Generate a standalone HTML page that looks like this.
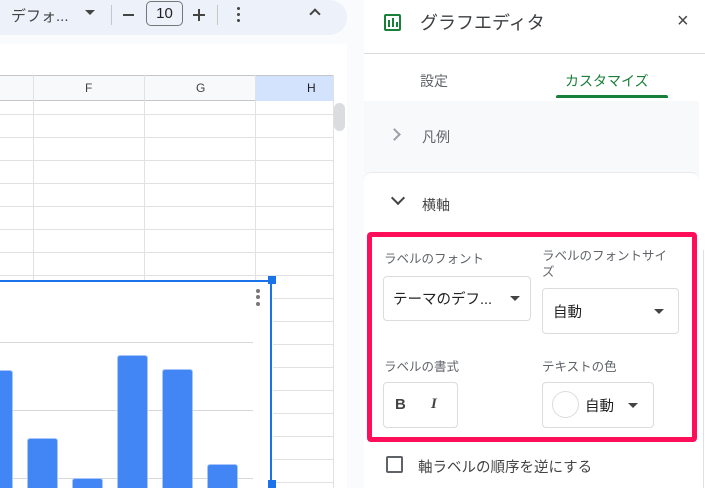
<!DOCTYPE html>
<html style="overflow:hidden;width:705px;height:488px"><head><meta charset="utf-8"><style>
*{margin:0;padding:0;box-sizing:border-box}
body{width:705px;height:488px;overflow:hidden;position:relative;background:#f9fbfd;font-family:"Liberation Sans","Noto Sans CJK JP",sans-serif;color:#444}
.a{position:absolute}
.hl{position:absolute;height:1px;background:#e1e1e1}
.vl{position:absolute;width:1px;background:#e1e1e1}
.bar{position:absolute;background:#4285f4;border-radius:2px 2px 0 0;box-shadow:0 0 0 1px #a8c6fa}
</style></head><body>
<div class="a" style="left:0;top:0;width:705px;height:488px;overflow:hidden">
<!-- toolbar -->
<div class="a" style="left:-20px;top:0;width:367px;height:35px;background:#edf2fa;border-radius:0 18px 18px 0"></div>
<div class="a" style="left:11px;top:5px;font-size:15px;color:#444">デフォ...</div>
<div class="a" style="left:85px;top:10px;width:0;height:0;border-left:5px solid transparent;border-right:5px solid transparent;border-top:5px solid #444"></div>
<div class="a" style="left:111px;top:5px;width:1px;height:20px;background:#c7c7c7"></div>
<div class="a" style="left:123px;top:14px;width:11px;height:2px;background:#444"></div>
<div class="a" style="left:146px;top:1px;width:37px;height:25px;border:1px solid #747775;border-radius:5px;font-size:15px;text-align:center;line-height:23px;color:#222">10</div>
<div class="a" style="left:193px;top:14px;width:12px;height:2px;background:#444"></div>
<div class="a" style="left:198px;top:9px;width:2px;height:12px;background:#444"></div>
<div class="a" style="left:217px;top:5px;width:1px;height:20px;background:#c7c7c7"></div>
<div class="a" style="left:237px;top:7px;width:3px;height:3px;border-radius:50%;background:#444;box-shadow:0 6px 0 #444,0 12px 0 #444"></div>
<div class="a" style="left:311px;top:10px;width:8px;height:8px;border-left:2px solid #444;border-top:2px solid #444;transform:rotate(45deg)"></div>
<!-- sheet -->
<div class="a" style="left:0;top:44px;width:347px;height:444px;background:#fff"></div>
<div class="a" style="left:0;top:75px;width:333px;height:26px;background:#f8f9fa;border-top:1px solid #c4c7c5;border-bottom:1px solid #c4c7c5"></div>
<div class="a" style="left:255px;top:76px;width:78px;height:25px;background:#d3e3fd"></div>
<div class="a" style="left:85px;top:81px;font-size:12px;color:#444">F</div>
<div class="a" style="left:196px;top:81px;font-size:12px;color:#444">G</div>
<div class="a" style="left:307px;top:81px;font-size:12px;color:#1f1f1f">H</div>
<div class="vl" style="left:33px;top:75px;height:205px"></div>
<div class="vl" style="left:144px;top:75px;height:205px"></div>
<div class="vl" style="left:255px;top:75px;height:205px"></div>
<div class="vl" style="left:333px;top:75px;height:413px"></div>
<div class="hl" style="left:0;top:114px;width:333px"></div>
<div class="hl" style="left:0;top:137px;width:333px"></div>
<div class="hl" style="left:0;top:160px;width:333px"></div>
<div class="hl" style="left:0;top:183px;width:333px"></div>
<div class="hl" style="left:0;top:206px;width:333px"></div>
<div class="hl" style="left:0;top:229px;width:333px"></div>
<div class="hl" style="left:0;top:252px;width:333px"></div>
<div class="hl" style="left:0;top:275px;width:333px"></div>
<div class="hl" style="left:273px;top:298px;width:60px"></div>
<div class="hl" style="left:273px;top:321px;width:60px"></div>
<div class="hl" style="left:273px;top:344px;width:60px"></div>
<div class="hl" style="left:273px;top:367px;width:60px"></div>
<div class="hl" style="left:273px;top:390px;width:60px"></div>
<div class="hl" style="left:273px;top:413px;width:60px"></div>
<div class="hl" style="left:273px;top:436px;width:60px"></div>
<div class="hl" style="left:273px;top:459px;width:60px"></div>
<div class="hl" style="left:273px;top:482px;width:60px"></div>
<div class="a" style="left:334px;top:103px;width:11px;height:28px;background:#dadce0;border-radius:6px"></div>
<!-- chart -->
<div class="a" style="left:0;top:280px;width:272px;height:208px;background:#fff;border-top:2px solid #1a73e8;border-right:2px solid #1a73e8;overflow:hidden">
<div class="a" style="left:256px;top:7px;width:4px;height:4px;border-radius:50%;background:#777;box-shadow:0 6px 0 #777,0 13px 0 #777"></div>
<div class="hl" style="left:0;top:60px;width:253px;background:#d8d8d8"></div>
<div class="hl" style="left:0;top:128px;width:253px;background:#d8d8d8"></div>
<div class="hl" style="left:0;top:196px;width:253px;background:#d8d8d8"></div>
<div class="bar" style="left:-4px;top:89px;width:16px;height:130px"></div>
<div class="bar" style="left:28px;top:157px;width:29px;height:60px"></div>
<div class="bar" style="left:73px;top:197px;width:29px;height:20px"></div>
<div class="bar" style="left:118px;top:74px;width:29px;height:140px"></div>
<div class="bar" style="left:163px;top:88px;width:29px;height:130px"></div>
<div class="bar" style="left:208px;top:183px;width:29px;height:30px"></div>
</div>
<div class="a" style="left:268px;top:276px;width:8px;height:8px;background:#1a73e8"></div>
<div class="a" style="left:268px;top:480px;width:8px;height:8px;background:#1a73e8"></div>
<!-- panel -->
<div class="a" style="left:364px;top:0;width:341px;height:488px;background:#fff"></div>
<div class="a" style="left:384px;top:14px;width:17px;height:17px;border:2px solid #188038;border-radius:2px"></div>
<div class="a" style="left:388px;top:20px;width:2px;height:7px;background:#188038"></div>
<div class="a" style="left:392px;top:18px;width:2px;height:9px;background:#188038"></div>
<div class="a" style="left:396px;top:22px;width:2px;height:5px;background:#188038"></div>
<div class="a" style="left:420px;top:9px;font-size:18px;color:#3c4043">グラフエディタ</div>
<div class="a" style="left:677px;top:10px;font-size:20px;color:#444">×</div>
<div class="a" style="left:364px;top:53px;width:341px;height:1px;background:#dadce0"></div>
<div class="a" style="left:420px;top:71px;font-size:14px;color:#5f6368">設定</div>
<div class="a" style="left:565px;top:71px;font-size:14px;color:#188038">カスタマイズ</div>
<div class="a" style="left:556px;top:95px;width:112px;height:3px;background:#188038;border-radius:2px 2px 0 0"></div>
<div class="a" style="left:364px;top:101px;width:335px;height:387px;background:#f8f9fa"></div>
<div class="a" style="left:390px;top:130px;width:9px;height:9px;border-right:2px solid #9aa0a6;border-top:2px solid #9aa0a6;transform:rotate(45deg)"></div>
<div class="a" style="left:422px;top:127px;font-size:14px;color:#5f6368">凡例</div>
<div class="a" style="left:364px;top:172px;width:335px;height:316px;background:#fff;border-radius:8px 8px 0 0;border-top:1px solid #e8eaed"></div>
<div class="a" style="left:393px;top:193px;width:10px;height:10px;border-right:2px solid #444;border-bottom:2px solid #444;transform:rotate(45deg)"></div>
<div class="a" style="left:422px;top:195px;font-size:14px;color:#444">横軸</div>
<div class="a" style="left:367px;top:232px;width:330px;height:210px;border:5px solid #ff0f5a;border-radius:4px"></div>
<div class="a" style="left:384px;top:248px;font-size:12.5px;color:#5f6368">ラベルのフォント</div>
<div class="a" style="left:542px;top:248px;font-size:12.5px;color:#5f6368;line-height:16px;width:150px">ラベルのフォントサイ<br>ズ</div>
<div class="a" style="left:383px;top:276px;width:148px;height:45px;border:1px solid #dadce0;border-radius:4px"></div>
<div class="a" style="left:393px;top:288px;font-size:14.5px;color:#222">テーマのデフ...</div>
<div class="a" style="left:510px;top:296px;border-left:5px solid transparent;border-right:5px solid transparent;border-top:5px solid #444"></div>
<div class="a" style="left:542px;top:288px;width:137px;height:46px;border:1px solid #dadce0;border-radius:4px"></div>
<div class="a" style="left:553px;top:301px;font-size:14.5px;color:#222">自動</div>
<div class="a" style="left:654px;top:309px;border-left:5px solid transparent;border-right:5px solid transparent;border-top:5px solid #444"></div>
<div class="a" style="left:384px;top:356px;font-size:12.5px;color:#5f6368">ラベルの書式</div>
<div class="a" style="left:542px;top:356px;font-size:12.5px;color:#5f6368">テキストの色</div>
<div class="a" style="left:383px;top:382px;width:75px;height:46px;border:1px solid #dadce0;border-radius:4px"></div>
<div class="a" style="left:395px;top:396px;font-size:15px;font-weight:bold;color:#444">B</div>
<div class="a" style="left:431px;top:396px;font-size:15px;font-weight:bold;font-style:italic;color:#444;font-family:'Liberation Serif',serif">I</div>
<div class="a" style="left:542px;top:382px;width:112px;height:46px;border:1px solid #dadce0;border-radius:4px"></div>
<div class="a" style="left:552px;top:391px;width:27px;height:27px;border:1px solid #dadce0;border-radius:50%"></div>
<div class="a" style="left:585px;top:395px;font-size:14.5px;color:#222">自動</div>
<div class="a" style="left:628px;top:403px;border-left:5px solid transparent;border-right:5px solid transparent;border-top:5px solid #444"></div>
<div class="a" style="left:386px;top:456px;width:17px;height:17px;border:2px solid #5f6368;border-radius:2px"></div>
<div class="a" style="left:418px;top:456px;font-size:14.5px;color:#444">軸ラベルの順序を逆にする</div>
<div class="a" style="left:703px;top:250px;width:1px;height:238px;background:#e0e0e0"></div>
</div>
</body></html>
